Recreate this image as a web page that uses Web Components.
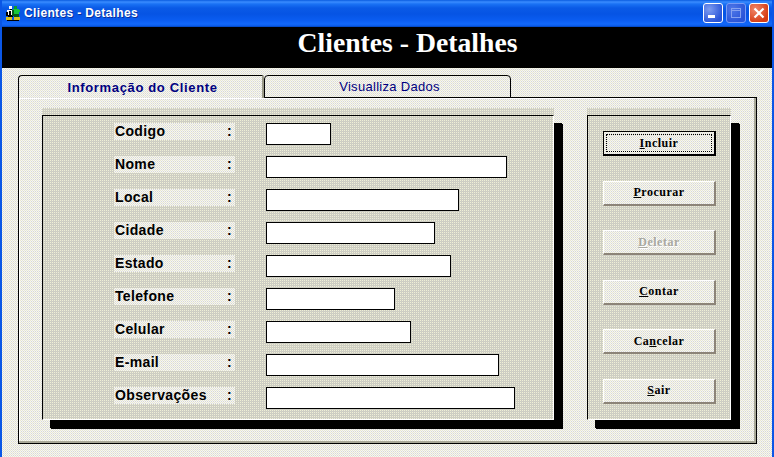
<!DOCTYPE html>
<html>
<head>
<meta charset="utf-8">
<title>Clientes - Detalhes</title>
<style>
  html, body { margin: 0; padding: 0; background: #000; }
  body {
    --page-dither: url("data:image/svg+xml,%3Csvg xmlns='http://www.w3.org/2000/svg' width='2' height='2' shape-rendering='crispEdges'%3E%3Crect width='2' height='2' fill='%23f6f6f2'/%3E%3Crect width='1' height='1' fill='%23e8e8d4'/%3E%3Crect x='1' y='1' width='1' height='1' fill='%23d8d8d8'/%3E%3C/svg%3E") fixed;
    --panel-dither: url("data:image/svg+xml,%3Csvg xmlns='http://www.w3.org/2000/svg' width='2' height='2' shape-rendering='crispEdges'%3E%3Crect width='2' height='2' fill='%23cbcbc6'/%3E%3Crect width='1' height='1' fill='%23f0f0d4'/%3E%3Crect x='1' y='1' width='1' height='1' fill='%23d0d0c0'/%3E%3C/svg%3E") fixed;
  }
</style>
</head>
<body>

<xp-window caption="Clientes - Detalhes">
  <form-header>Clientes - Detalhes</form-header>
  <tab-strip>
    <tab-button active>Informação do Cliente</tab-button>
    <tab-button>Visualliza Dados</tab-button>
  </tab-strip>
  <tab-page>
    <field-panel>
      <field-row label="Codigo" size="65"></field-row>
      <field-row label="Nome" size="241"></field-row>
      <field-row label="Local" size="193"></field-row>
      <field-row label="Cidade" size="169"></field-row>
      <field-row label="Estado" size="185"></field-row>
      <field-row label="Telefone" size="129"></field-row>
      <field-row label="Celular" size="145"></field-row>
      <field-row label="E-mail" size="233"></field-row>
      <field-row label="Observações" size="249"></field-row>
    </field-panel>
    <action-panel>
      <action-button focused><u>I</u>ncluir</action-button>
      <action-button><u>P</u>rocurar</action-button>
      <action-button disabled><u>D</u>eletar</action-button>
      <action-button><u>C</u>ontar</action-button>
      <action-button>Ca<u>n</u>celar</action-button>
      <action-button><u>S</u>air</action-button>
    </action-panel>
  </tab-page>
</xp-window>

<script>
class XpWindow extends HTMLElement {
  constructor() {
    super();
    this.attachShadow({ mode: 'open' });
    this.shadowRoot.innerHTML = `
      <style>
        :host { display: flex; flex-direction: column; box-sizing: border-box; width: 774px; height: 457px;
                border: solid #0a56e6; border-width: 0 2px; background: var(--page-dither); overflow: hidden; }
        .bar { flex: none; height: 27px; margin: 0 -2px; display: flex; align-items: center; padding: 0 5px 2px 5px; box-sizing: border-box;
               background: linear-gradient(#0a5ce0 0, #3a8cff 2px, #1a72f4 4px, #0a5ae6 8px, #0654e4 14px, #0a5cf0 20px, #1268fa 24px, #0a5ae8 26px, #0040b0 27px);
               font: bold 12px "Liberation Sans", sans-serif; letter-spacing: .35px; color: #fff; text-shadow: 1px 1px #0a2f9c; }
        .icon { flex: none; width: 16px; height: 16px; margin-right: 3px; }
        .cap { flex: 1; }
        .ctl { flex: none; box-sizing: border-box; width: 20px; height: 20px; margin-left: 3px; margin-top: 1px; border: 1px solid #fff; border-radius: 3px; display: block; }
        .min { background: radial-gradient(circle at 30% 30%, #7d9cf0, #2a55d8 75%); }
        .max { background: radial-gradient(circle at 30% 30%, #4f78e8, #2a55d8 75%); border-color: #7b9cf4; }
        .close { background: radial-gradient(circle at 30% 30%, #f0876a, #d63c14 75%); }
      </style>
      <div class="bar">
        <svg class="icon" viewBox="0 0 16 16" shape-rendering="crispEdges">
          <rect x="4" y="1" width="3" height="3" fill="#fff"/><rect x="5" y="4" width="2" height="1" fill="#000"/>
          <rect x="2" y="5" width="6" height="5" fill="#fff"/><rect x="1" y="7" width="2" height="4" fill="#000"/>
          <rect x="4" y="6" width="2" height="4" fill="#000"/><rect x="3" y="10" width="5" height="2" fill="#000"/>
          <rect x="9" y="1" width="3" height="3" fill="#0c9a2c"/><rect x="8" y="4" width="6" height="5" fill="#18c838"/>
          <rect x="7" y="5" width="2" height="6" fill="#085c18"/><rect x="12" y="5" width="3" height="2" fill="#18c838"/>
          <rect x="9" y="9" width="5" height="3" fill="#085c18"/>
          <rect x="1" y="12" width="6" height="3" fill="#d8c020"/><rect x="9" y="12" width="6" height="3" fill="#d8c020"/>
          <rect x="2" y="15" width="12" height="1" fill="#000"/>
        </svg>
        <span class="cap"></span>
        <svg class="ctl min" viewBox="0 0 18 18" shape-rendering="crispEdges"><rect x="4" y="11" width="7" height="3" fill="#fff"/></svg>
        <svg class="ctl max" viewBox="0 0 18 18" shape-rendering="crispEdges"><path d="M4.500 4.500h9v9h-9z M4 6.500h10" fill="none" stroke="#86a2f0"/></svg>
        <svg class="ctl close" viewBox="0 0 18 18"><path d="M4.500 4.500l9 9M13.500 4.500l-9 9" stroke="#fff" stroke-width="2.200" fill="none"/></svg>
      </div>
      <slot></slot>`;
    this.shadowRoot.querySelector('.cap').textContent = this.getAttribute('caption');
  }
}
customElements.define('xp-window', XpWindow);

class FormHeader extends HTMLElement {
  constructor() {
    super();
    this.attachShadow({ mode: 'open' });
    this.shadowRoot.innerHTML = `
      <style>
        :host { display: block; flex: none; height: 34px; padding: 0 0 7px 41px; margin-bottom: 7px; background: #000; color: #fff; text-align: center;
                font: bold 27.7px/32px "Liberation Serif", serif; }
      </style>
      <slot></slot>`;
  }
}
customElements.define('form-header', FormHeader);

class TabStrip extends HTMLElement {
  constructor() {
    super();
    this.attachShadow({ mode: 'open' });
    this.shadowRoot.innerHTML = `
      <style>
        :host { display: flex; flex: none; height: 23px; margin: 0 0 -1px 16px; position: relative; z-index: 1; }
      </style>
      <slot></slot>`;
  }
}
customElements.define('tab-strip', TabStrip);

class TabButton extends HTMLElement {
  constructor() {
    super();
    this.attachShadow({ mode: 'open' });
    this.shadowRoot.innerHTML = `
      <style>
        :host { display: block; box-sizing: border-box; width: 247px; height: 23px; padding: 3px 0 0 4px; text-align: center;
                border: 1px solid #000; border-radius: 4px 4px 0 0;
                background: var(--page-dither); color: #000080; font: 13px/15px "Liberation Sans", sans-serif; letter-spacing: .3px; }
        :host([active]) { width: 246px; border-bottom: 0; border-right: 2px solid #9a9a88; border-top-right-radius: 2px; font-weight: bold; padding-top: 4px; padding-left: 4px; letter-spacing: .65px; }
      </style>
      <slot></slot>`;
  }
}
customElements.define('tab-button', TabButton);

class TabPage extends HTMLElement {
  constructor() {
    super();
    this.attachShadow({ mode: 'open' });
    this.shadowRoot.innerHTML = `
      <style>
        :host { display: flex; align-items: flex-start; gap: 33px; flex: none; box-sizing: border-box; width: 739px; height: 347px; margin-left: 16px;
                padding: 10px 26px 0 23px; border: 1px solid #000; background: var(--page-dither);
                box-shadow: inset -2px -2px 0 #a8a898, inset 1px 1px 0 #fff; }
      </style>
      <slot></slot>`;
  }
}
customElements.define('tab-page', TabPage);

const raisedPanel = `
  :host { display: block; flex: none; box-sizing: border-box; height: 312px; padding-top: 7px; background: var(--panel-dither); }
  .face { box-sizing: border-box; height: 305px; border: solid #fff; border-width: 0 1px 1px 0;
          border-top: 1px solid #000; border-left: 1px solid #000; background: var(--panel-dither);
          box-shadow: 8px 8px 0 #000, 9px 9px 0 #000; }`;

class FieldPanel extends HTMLElement {
  constructor() {
    super();
    this.attachShadow({ mode: 'open' });
    this.shadowRoot.innerHTML = `
      <style>
        ${raisedPanel}
        :host { width: 512px; }
        .face { display: flex; flex-direction: column; gap: 11px; padding: 7px 0 0 71px; }
      </style>
      <div class="face"><slot></slot></div>`;
  }
}
customElements.define('field-panel', FieldPanel);

class FieldRow extends HTMLElement {
  constructor() {
    super();
    this.attachShadow({ mode: 'open' });
    this.shadowRoot.innerHTML = `
      <style>
        :host { display: flex; align-items: flex-start; gap: 31px; height: 22px; }
        label { box-sizing: border-box; flex: none; width: 121px; height: 17px; padding: 0 3px 0 1px; display: flex; justify-content: space-between;
                background: var(--page-dither); color: #000; font: bold 14px/16px "Liberation Sans", sans-serif; letter-spacing: .35px; }
        input { box-sizing: border-box; flex: none; height: 22px; margin: 0; padding: 0; border: 1px solid #000; background: #fff; outline: none; }
      </style>
      <label><span class="name"></span><span>:</span></label>
      <input type="text">`;
  }
  connectedCallback() {
    this.shadowRoot.querySelector('.name').textContent = this.getAttribute('label');
    this.shadowRoot.querySelector('input').style.width = this.getAttribute('size') + 'px';
  }
}
customElements.define('field-row', FieldRow);

class ActionPanel extends HTMLElement {
  constructor() {
    super();
    this.attachShadow({ mode: 'open' });
    this.shadowRoot.innerHTML = `
      <style>
        ${raisedPanel}
        :host { width: 144px; }
        .face { display: flex; flex-direction: column; justify-content: space-between; padding: 15px 0 15px 15px; }
      </style>
      <div class="face"><slot></slot></div>`;
  }
}
customElements.define('action-panel', ActionPanel);

class ActionButton extends HTMLElement {
  constructor() {
    super();
    this.attachShadow({ mode: 'open' });
    this.shadowRoot.innerHTML = `
      <style>
        :host { display: flex; align-items: center; justify-content: center; box-sizing: border-box; width: 113px; height: 25px;
                background: var(--page-dither); color: #000; font: bold 12px "Liberation Serif", serif; letter-spacing: .5px;
                border: solid; border-width: 1px 2px 2px 1px; border-color: #fff #8c8478 #8c8478 #fff; }
        :host([focused]) { border: 1px solid #000; border-width: 1px 2px 2px 1px; position: relative; }
        :host([focused]) .ring { display: block; }
        :host([disabled]) { color: #a8a8a0; text-shadow: 1px 1px #fff; }
        .ring { display: none; position: absolute; inset: 2px; border: 1px dotted #000; }
      </style>
      <span class="ring"></span>
      <slot></slot>`;
  }
}
customElements.define('action-button', ActionButton);
</script>
</body>
</html>
